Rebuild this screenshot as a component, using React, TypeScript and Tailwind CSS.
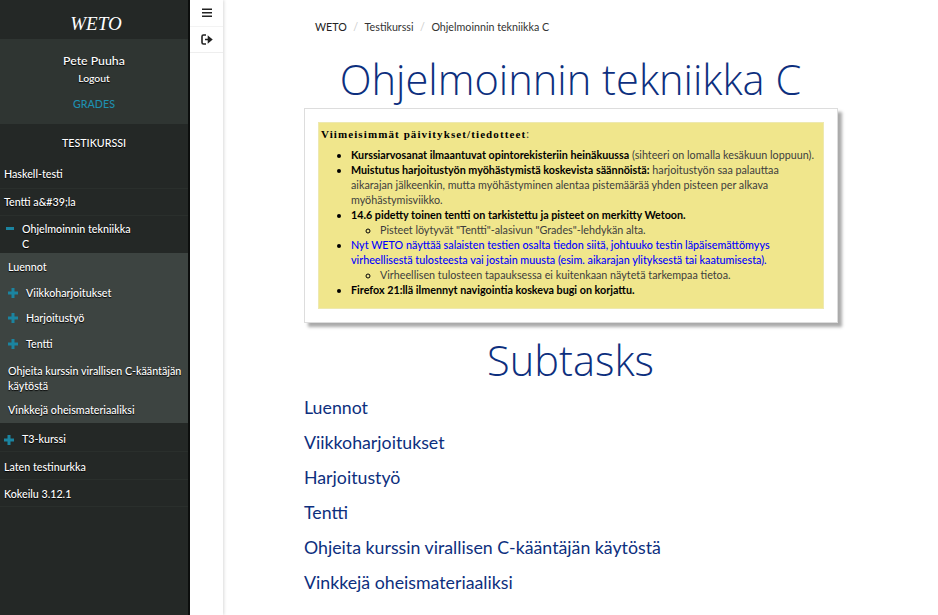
const lato = "font-['Lato',sans-serif]";

function PlusIcon({ className = '' }: { className?: string }) {
  return (
    <svg width="10" height="10" viewBox="0 0 10 10" fill="#1b84a0" className={`shrink-0 ${className}`}>
      <rect x="0" y="3.5" width="10" height="3" />
      <rect x="3.5" y="0" width="3" height="10" />
    </svg>
  );
}

function TopRow({ label, className = '' }: { label: string; className?: string }) {
  return (
    <div className={`h-[27.5px] flex items-center pl-1 text-[10.7px] font-medium text-white [text-shadow:0_1px_1px_#000] border-b border-[#2a2f2c] ${className}`}>
      {label}
    </div>
  );
}

function SubRow({ label, plus }: { label: string; plus?: boolean }) {
  return (
    <div className="h-[25.5px] flex items-center pl-2 text-[10.7px] font-medium text-white [text-shadow:0_1px_1px_#000]">
      {plus ? <PlusIcon className="mr-[8px]" /> : null}
      {label}
    </div>
  );
}

export default function App() {
  return (
    <div className={`${lato} h-[615px] w-[938px] overflow-hidden flex bg-white`}>
      <aside className="w-[190px] shrink-0 bg-[#242826] border-r-2 border-[#0d0f0e] flex flex-col">
        <div className="h-[39px] flex items-center justify-center pt-[10px] pl-[4px] font-['Liberation_Serif',serif] italic text-[19px] text-white">
          WETO
        </div>
        <div className="h-[85px] bg-[#2f3532] flex flex-col items-center pt-[13px] text-white font-medium [text-shadow:0_1px_1px_#000]">
          <div className="text-[12.3px] leading-[18px]">Pete Puuha</div>
          <div className="text-[10.4px] leading-[16px]">Logout</div>
          <div className="text-[10.7px] leading-[16px] mt-[10px] text-[#1e8fb0] [text-shadow:none]">GRADES</div>
        </div>
        <div className="h-[37px] flex items-center justify-center text-[10.7px] font-medium text-white [text-shadow:0_1px_1px_#000] pt-[1px]">TESTIKURSSI</div>
        <TopRow label="Haskell-testi" />
        <TopRow label={'Tentti a&#39;la'} />
        <div className="h-[37px] flex items-start pl-[6px] pt-[5px] text-[10.7px] font-medium leading-[15px] text-white [text-shadow:0_1px_1px_#000]">
          <svg width="8" height="3" viewBox="0 0 8 3" fill="#1b84a0" className="shrink-0 mt-[6px] mr-[8px]">
            <rect width="8" height="3" />
          </svg>
          <span className="w-[115px]">Ohjelmoinnin tekniikka C</span>
        </div>
        <div className="bg-[#3d4441] pt-[1.5px]">
          <SubRow label="Luennot" />
          <SubRow label="Viikkoharjoitukset" plus />
          <SubRow label="Harjoitustyö" plus />
          <SubRow label="Tentti" plus />
          <div className="pl-2 pt-[6px] pb-[5px] text-[10.7px] font-medium leading-[15px] text-white [text-shadow:0_1px_1px_#000]">Ohjeita kurssin virallisen C-kääntäjän käytöstä</div>
          <SubRow label="Vinkkejä oheismateriaaliksi" />
        </div>
        <div className="h-[29px] flex items-center pl-1 pt-[5px] text-[10.7px] font-medium text-white [text-shadow:0_1px_1px_#000] border-b border-[#2a2f2c]">
          <PlusIcon className="mr-[8px]" />
          T3-kurssi
        </div>
        <TopRow label="Laten testinurkka" className="pt-[3px]" />
        <TopRow label="Kokeilu 3.12.1" className="pt-[2px]" />
      </aside>

      <div className="w-[33px] shrink-0 bg-white shadow-[1px_0_3px_rgba(0,0,0,0.15)] flex flex-col self-stretch">
        <div className="h-[27px] flex items-center justify-center border-b border-[#f3f3f3]">
          <svg width="10" height="10" viewBox="0 0 10 10" fill="#222">
            <rect x="0" y="0.5" width="10" height="1.5" />
            <rect x="0" y="4" width="10" height="1.5" />
            <rect x="0" y="7.5" width="10" height="1.5" />
          </svg>
        </div>
        <div className="h-[26px] flex items-center justify-center border-b border-[#eeeeee]">
          <svg width="12" height="11" viewBox="0 0 12 11" fill="none" stroke="#222" strokeWidth="1.6">
            <path d="M5 1H2.5A1.5 1.5 0 0 0 1 2.5v6A1.5 1.5 0 0 0 2.5 10H5" />
            <path d="M4 5.5h4M7.5 3l3 2.5-3 2.5z" fill="#222" />
          </svg>
        </div>
      </div>

      <main className="flex-1 min-w-0 pl-[81px] pr-[100px]">
        <div className="flex items-center h-[54px] pl-[11px] text-[10.7px] text-[#333]">
          <span className="text-[#222]">WETO</span>
          <span className="mx-[6.5px] text-[#ccc]">/</span>
          <span>Testikurssi</span>
          <span className="mx-[6.5px] text-[#ccc]">/</span>
          <span>Ohjelmoinnin tekniikka C</span>
        </div>
        <h1 className="font-['Open_Sans',sans-serif] font-light text-[41.6px] leading-[48px] text-center text-[#0d2f7e] w-[533px] pt-[1px] h-[48px]">
          Ohjelmoinnin tekniikka C
        </h1>
        <div className="w-[534px] h-[215px] mt-[6px] p-[13px] bg-white border border-[#dddddd] shadow-[4px_4px_3px_#aaaaaa]">
          <div className="bg-[#f0e68c] h-[187px] pl-[2px] pt-[3px] text-[10.75px] leading-[15px] text-[#3d3d3d] border border-[#eee9b0]">
            <div className="leading-[15px] mb-[5px]">
              <b className="font-['Liberation_Serif',serif] font-bold text-black text-[11px] tracking-[1.1px]">Viimeisimmät päivitykset/tiedotteet</b>:
            </div>
            <ul className="list-disc pl-[30px] marker:text-black">
              <li><b className="text-black">Kurssiarvosanat ilmaantuvat opintorekisteriin heinäkuussa</b> (sihteeri on lomalla kesäkuun loppuun).</li>
              <li><b className="text-black">Muistutus harjoitustyön myöhästymistä koskevista säännöistä:</b> harjoitustyön saa palauttaa aikarajan jälkeenkin, mutta myöhästyminen alentaa pistemäärää yhden pisteen per alkava myöhästymisviikko.</li>
              <li>
                <b className="text-black">14.6 pidetty toinen tentti on tarkistettu ja pisteet on merkitty Wetoon.</b>
                <ul className="list-[circle] pl-[29px]"><li>Pisteet löytyvät "Tentti"-alasivun "Grades"-lehdykän alta.</li></ul>
              </li>
              <li>
                <span className="text-[#0000ff] font-medium">Nyt WETO näyttää salaisten testien osalta tiedon siitä, johtuuko testin läpäisemättömyys virheellisestä tulosteesta vai jostain muusta (esim. aikarajan ylityksestä tai kaatumisesta).</span>
                <ul className="list-[circle] pl-[29px]"><li>Virheellisen tulosteen tapauksessa ei kuitenkaan näytetä tarkempaa tietoa.</li></ul>
              </li>
              <li><b className="text-black">Firefox 21:llä ilmennyt navigointia koskeva bugi on korjattu.</b></li>
            </ul>
          </div>
        </div>
        <h2 className="font-['Open_Sans',sans-serif] font-light text-[41.6px] leading-[44px] text-center text-[#0d2f7e] w-[533px] mt-[15px]">
          Subtasks
        </h2>
        <div className="mt-[13px] flex flex-col gap-[11px] text-[17.75px] leading-[24px] text-[#0d2f7e]">
          <div>Luennot</div>
          <div>Viikkoharjoitukset</div>
          <div>Harjoitustyö</div>
          <div>Tentti</div>
          <div>Ohjeita kurssin virallisen C-kääntäjän käytöstä</div>
          <div>Vinkkejä oheismateriaaliksi</div>
        </div>
      </main>
    </div>
  );
}
